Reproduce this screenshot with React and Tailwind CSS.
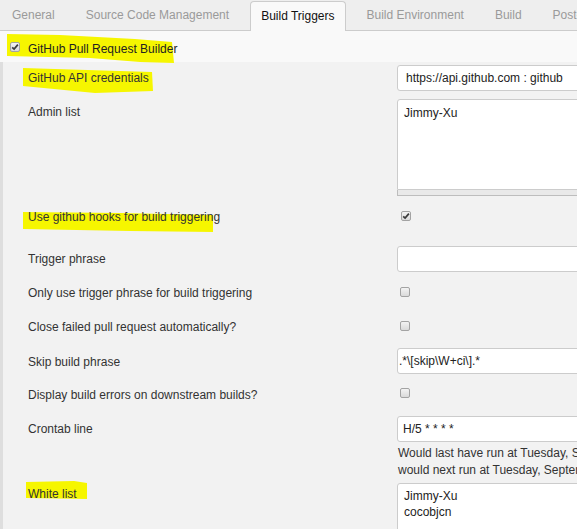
import React from "react";

function Box({ checked }) {
  return (
    <span className="relative inline-flex h-[10px] w-[10px] shrink-0 items-center justify-center rounded-[2px] border border-[#a3a3a3] bg-gradient-to-b from-[#f3f3f3] to-[#dadada]">
      {checked && (
        <svg width="8" height="8" viewBox="0 0 8 8" className="block">
          <path d="M1.2 4.3 L3.1 6.1 L6.9 1.6" stroke="#3a3a3a" strokeWidth="1.7" fill="none" />
        </svg>
      )}
    </span>
  );
}

function Row({ label, h, pt, children }) {
  return (
    <div className={"flex " + h}>
      <div className={"w-[394px] shrink-0 pl-[25px] whitespace-nowrap " + pt}>
        <span className="relative">{label}</span>
      </div>
      <div className="min-w-0 flex-1">{children}</div>
    </div>
  );
}

function Input({ value, pl }) {
  return (
    <div className={"h-[26px] w-[300px] rounded-[3px] border border-[#cccccc] bg-white leading-[24px] text-[#222] whitespace-nowrap " + pl}>
      {value}
    </div>
  );
}

export default function App() {
  const tabs = ["General", "Source Code Management", "Build Triggers", "Build Environment", "Build", "Post-build Actions"];
  return (
    <div className="relative h-[529px] w-[577px] overflow-hidden bg-[#f2f2f2] font-['Liberation_Sans',Arial,sans-serif] text-[12px] leading-[16px] text-[#333]">
      <svg className="absolute left-0 top-0" width="577" height="529">
        <g fill="#f6f600">
          <polygon points="7,34 60,35 135,39 172,42 174,63 140,62 90,58 7,56" />
          <polygon points="23,68 152,72 153,91 95,93 23,86" />
          <polygon points="23,212 120,213 213,215 213,232 130,231 23,229" />
          <polygon points="26,482 74,481 87,483 87,499 26,498" />
        </g>
      </svg>

      {/* tab bar */}
      <div className="flex h-[31px] items-start gap-[11px] border-b border-[#cccccc] bg-[#eeeeee] pl-[2px] whitespace-nowrap">
        {tabs.map((t) =>
          t === "Build Triggers" ? (
            <div
              key={t}
              className="mt-[1px] h-[30px] rounded-t-[4px] border border-b-0 border-[#cccccc] bg-[#f9f9f9] px-[10px] pt-[6px] text-[#111]"
            >
              {t}
            </div>
          ) : (
            <div key={t} className="h-[30px] px-[10px] pt-[7px] text-[#9a9a9a]">
              {t}
            </div>
          )
        )}
      </div>

      {/* section header */}
      <div className="flex h-[31px] bg-[#f9f9f9] pl-[10px] pt-[10px]">
        <div className="relative flex items-start gap-[8px]">
          <span className="mt-[1px] flex">
            <Box checked />
          </span>
          <span className="relative text-[#222]">GitHub Pull Request Builder</span>
        </div>
      </div>

      {/* content */}
      <div className="h-full border-l-[3px] border-[#dedede] pt-[3px]">
        <Row label="GitHub API credentials" h="h-[34px]" pt="pt-[5px]">
          <Input value="https://api.github.com : github" pl="pl-[8px]" />
        </Row>

        <Row label="Admin list" h="h-[105px]" pt="pt-[5px]">
          <div className="w-[300px]">
            <div className="h-[91px] rounded-t-[3px] border border-[#cccccc] bg-white px-[6px] pt-[5px] text-[#222]">
              Jimmy-Xu
            </div>
            <div className="h-[6px] border-b border-l border-[#bdbdbd] bg-[#e9e9e9]" />
          </div>
        </Row>

        <Row label="Use github hooks for build triggering" h="h-[42px]" pt="pt-[5px]">
          <div className="ml-[4px] mt-[7px] flex">
            <Box checked />
          </div>
        </Row>

        <Row label="Trigger phrase" h="h-[34px]" pt="pt-[5px]">
          <Input value="" pl="pl-[5px]" />
        </Row>

        <Row label="Only use trigger phrase for build triggering" h="h-[34px]" pt="pt-[5px]">
          <div className="ml-[3px] mt-[7px] flex">
            <Box />
          </div>
        </Row>

        <Row label="Close failed pull request automatically?" h="h-[34px]" pt="pt-[5px]">
          <div className="ml-[3px] mt-[7px] flex">
            <Box />
          </div>
        </Row>

        <Row label="Skip build phrase" h="h-[34px]" pt="pt-[6px]">
          <Input value=".*\[skip\W+ci\].*" pl="pl-[1px]" />
        </Row>

        <Row label="Display build errors on downstream builds?" h="h-[34px]" pt="pt-[5px]">
          <div className="ml-[3px] mt-[6px] flex">
            <Box />
          </div>
        </Row>

        <Row label="Crontab line" h="h-[67px]" pt="pt-[5px]">
          <Input value="H/5 * * * *" pl="pl-[5px]" />
          <div className="mt-[3px] pl-[1px] leading-[17px] whitespace-nowrap text-[#333]">
            <div>Would last have run at Tuesday, September 13, 2016 2:00:53 AM CST;</div>
            <div>would next run at Tuesday, September 13, 2016 2:05:53 AM CST.</div>
          </div>
        </Row>

        <Row label="White list" h="h-[60px]" pt="pt-[3px]">
          <div className="h-[80px] w-[300px] rounded-[3px] border border-[#cccccc] bg-white px-[6px] pt-[4px] text-[#222]">
            <div>Jimmy-Xu</div>
            <div>cocobjcn</div>
          </div>
        </Row>
      </div>
    </div>
  );
}
